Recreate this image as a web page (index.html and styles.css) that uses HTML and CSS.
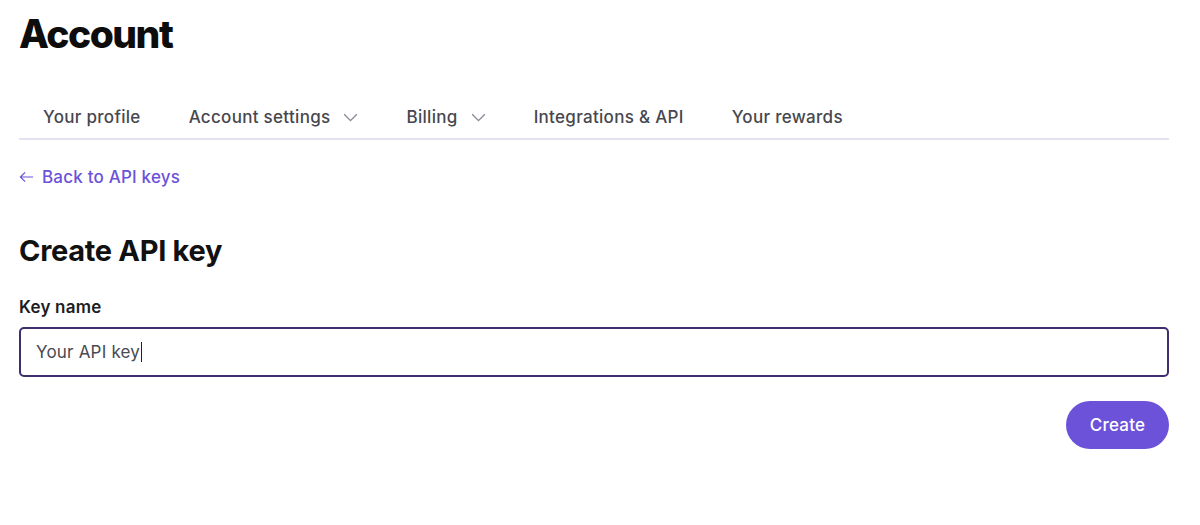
FILE: index.html
```html
<!DOCTYPE html>
<html lang="en">
<head>
<meta charset="utf-8">
<title>Account</title>
<link rel="stylesheet" href="styles.css">
</head>
<body>
<main class="page">
  <h1 class="title">Account</h1>
  <nav class="tabs">
    <a class="tab">Your profile</a>
    <a class="tab">Account settings
      <svg class="chev" viewBox="0 0 16 10" width="15" height="9"><path d="M1 1.5 L8 8.5 L15 1.5" fill="none" stroke="#8a8a96" stroke-width="1.5"/></svg>
    </a>
    <a class="tab">Billing
      <svg class="chev" viewBox="0 0 16 10" width="15" height="9"><path d="M1 1.5 L8 8.5 L15 1.5" fill="none" stroke="#8a8a96" stroke-width="1.5"/></svg>
    </a>
    <a class="tab">Integrations &amp; API</a>
    <a class="tab">Your rewards</a>
  </nav>
  <a class="back">
    <svg class="arrow" viewBox="0 0 16 12" width="15" height="12"><path d="M15 6 H1.5 M6.5 1 L1.5 6 L6.5 11" fill="none" stroke="#6b52d9" stroke-width="1.3"/></svg>
    <span>Back to API keys</span>
  </a>
  <h2 class="subtitle">Create API key</h2>
  <form class="form">
    <label class="label" for="keyname">Key name</label>
    <div class="input"><span class="value">Your API key</span><span class="caret"></span></div>
    <div class="actions">
      <button type="button" class="btn">Create</button>
    </div>
  </form>
</main>
</body>
</html>
```
FILE: styles.css
```css
* { box-sizing: border-box; }
html, body { margin: 0; padding: 0; background: #fff; }
body {
  font-family: "Inter", "Open Sans", sans-serif;
  color: #1a1a1a;
}
.page {
  padding: 12px 31px 0 19px;
  display: flex;
  flex-direction: column;
}
.title {
  margin: 0;
  font-family: "Inter", sans-serif;
  font-weight: 800;
  font-size: 39px;
  letter-spacing: -1.5px;
  line-height: 44px;
  color: #0d0d0d;
}
.tabs {
  margin-top: 39px;
  display: flex;
  border-bottom: 2px solid #e4e2ef;
  height: 45px;
}
.tab {
  padding: 0 24px;
  display: flex;
  align-items: center;
  gap: 13px;
  height: 43px;
  font-size: 17px;
  font-weight: 500;
  color: #47474f;
  letter-spacing: 0.3px;
}
.chev { display: block; margin-top: 2px; }
.back {
  margin-top: 26px;
  display: flex;
  align-items: center;
  gap: 8px;
  color: #6b52d9;
  font-size: 17px;
  font-weight: 500;
  letter-spacing: 0.2px;
  height: 22px;
}
.arrow { display: block; }
.subtitle {
  margin: 46px 0 0;
  font-family: "Inter", sans-serif;
  font-weight: 700;
  font-size: 29px;
  letter-spacing: -0.3px;
  line-height: 34px;
  color: #111;
}
.form { display: flex; flex-direction: column; }
.label {
  margin-top: 29px;
  font-size: 17px;
  font-weight: 600;
  color: #1d1d1f;
  line-height: 20px;
  letter-spacing: 0.2px;
}
.input {
  margin-top: 10px;
  height: 50px;
  border: 2px solid #3f2d6e;
  border-radius: 5px;
  padding: 0 15px;
  display: flex;
  align-items: center;
  font-size: 17px;
  letter-spacing: 0.2px;
  color: #4a4a52;
}
.caret {
  display: inline-block;
  width: 1px;
  height: 20px;
  background: #222;
  margin-left: 1px;
}
.actions {
  margin-top: 24px;
  display: flex;
  justify-content: flex-end;
}
.btn {
  width: 103px;
  height: 48px;
  border: none;
  border-radius: 24px;
  background: #6b52d9;
  color: #fff;
  font-family: "Inter", sans-serif;
  font-size: 17px;
  font-weight: 500;
  letter-spacing: 0.2px;
}
```
